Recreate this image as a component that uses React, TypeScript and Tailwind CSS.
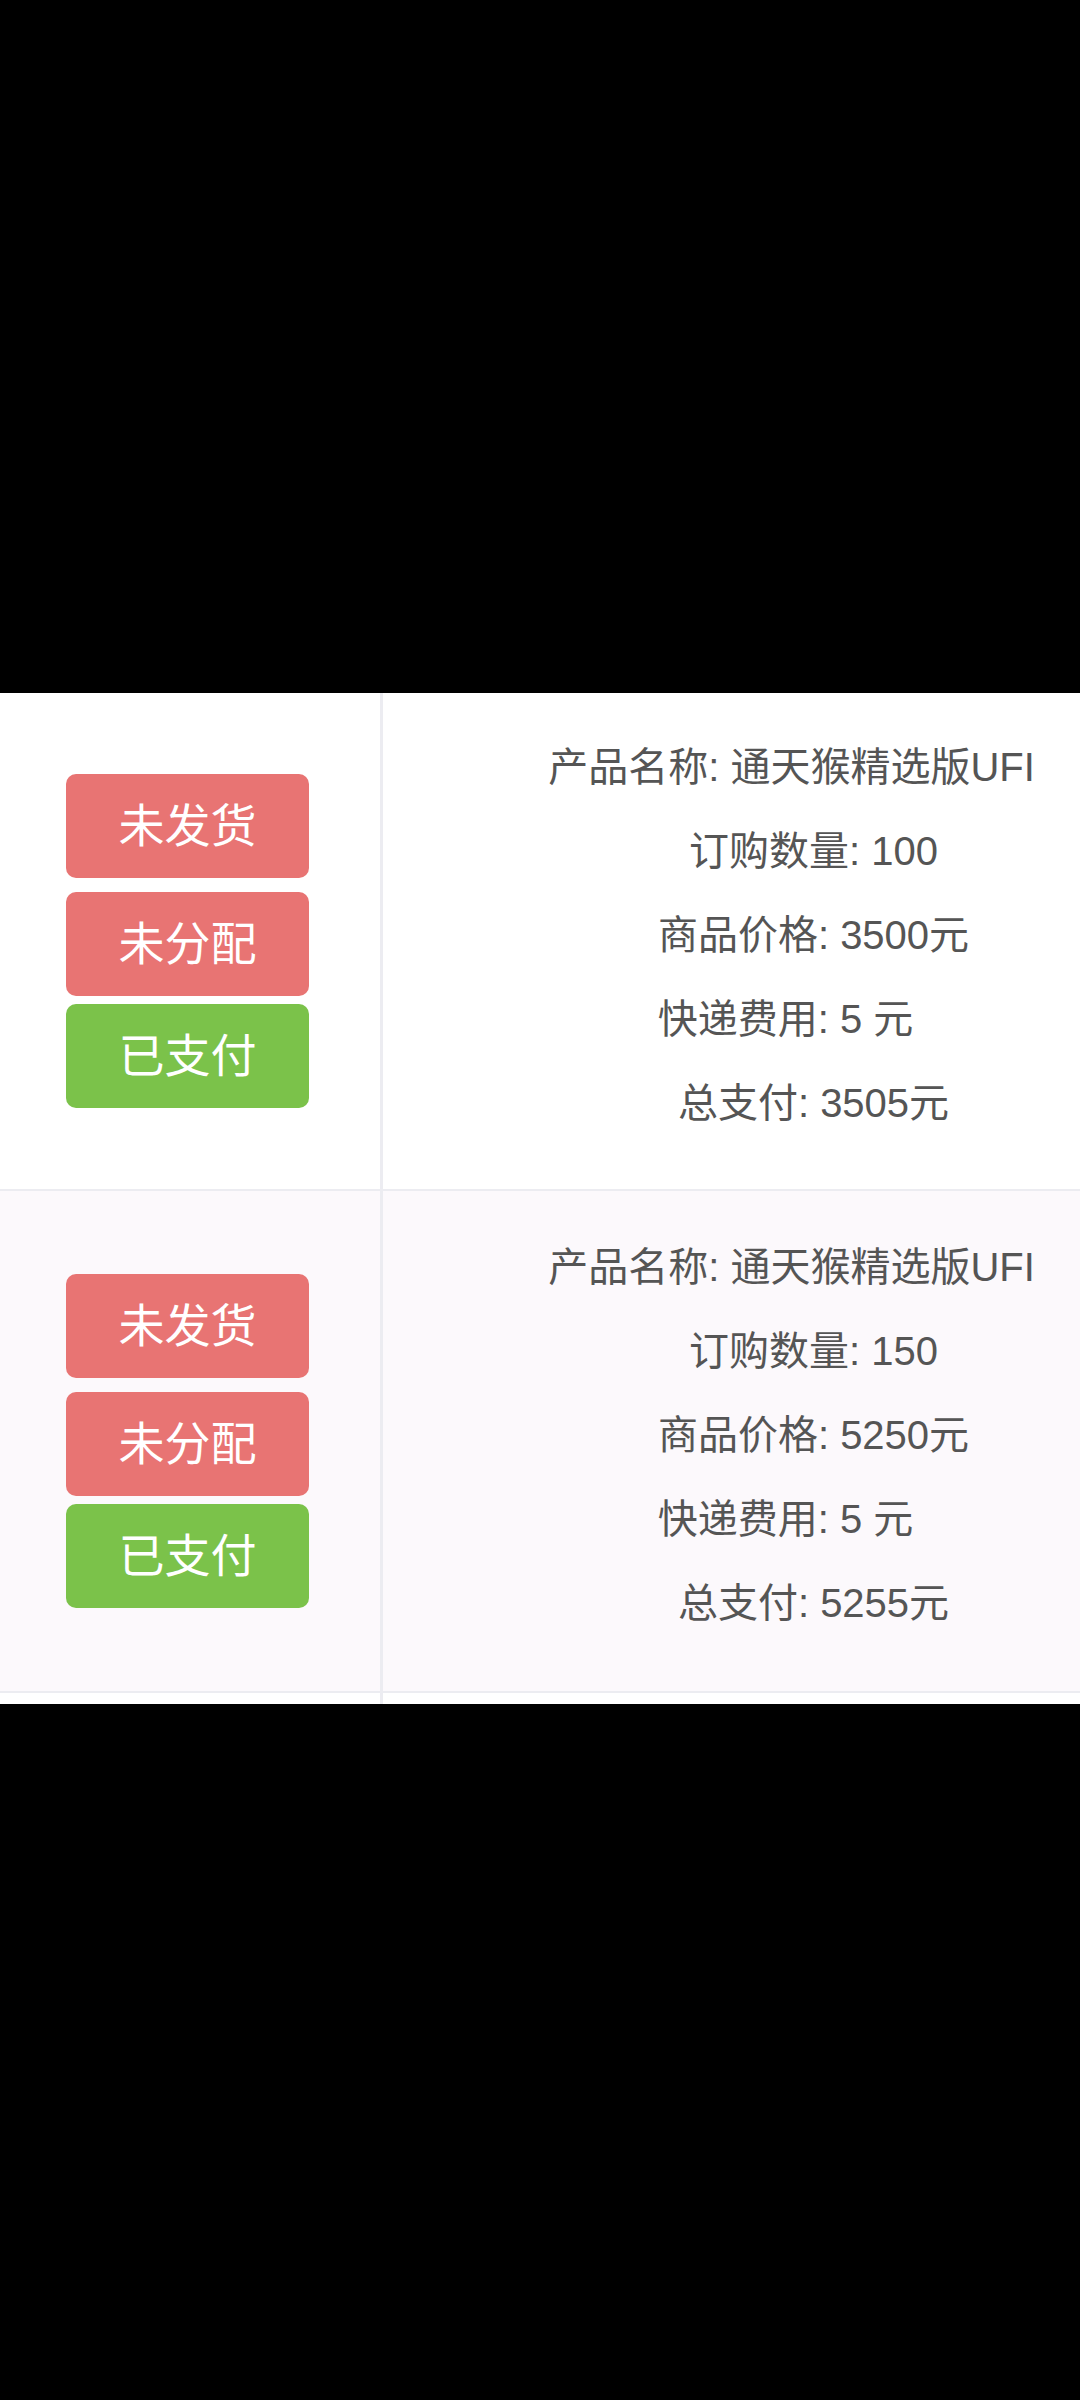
import React from "react";

type Order = {
  qty: number;
  price: number;
  total: number;
  bg: string;
};

const orders: Order[] = [
  { qty: 100, price: 3500, total: 3505, bg: "bg-white" },
  { qty: 150, price: 5250, total: 5255, bg: "bg-[#fcf9fc]" },
];

const StatusButtons = () => (
  <div className="flex flex-col pl-[66px]">
    <div className="w-[243px] h-[104px] mb-[14px] rounded-[10px] bg-[#e87473] text-white text-[46px] flex items-center justify-center">
      未发货
    </div>
    <div className="w-[243px] h-[104px] mb-[8px] rounded-[10px] bg-[#e87473] text-white text-[46px] flex items-center justify-center">
      未分配
    </div>
    <div className="w-[243px] h-[104px] rounded-[10px] bg-[#7bc24a] text-white text-[46px] flex items-center justify-center">
      已支付
    </div>
  </div>
);

const OrderRow = ({ order, height }: { order: Order; height: string }) => (
  <div className={`flex border-b-2 border-[#ececf1] ${order.bg} ${height}`}>
    {/* status column */}
    <div className="w-[383px] shrink-0 border-r-[3px] border-[#ececf1] flex items-center">
      <StatusButtons />
    </div>

    {/* detail column */}
    <div className="flex-1 flex flex-col items-center justify-center pl-[164px] pb-[12px] text-[40px] leading-[84px] text-[#555] whitespace-nowrap">
      <div className="mr-[44px]">产品名称: 通天猴精选版UFI</div>
      <div>订购数量: {order.qty}</div>
      <div>商品价格: {order.price}元</div>
      <div className="mr-[56px]">快递费用: 5 元</div>
      <div>总支付: {order.total}元</div>
    </div>
  </div>
);

export default function App() {
  return (
    <div
      className="w-[1080px] h-[2400px] bg-black overflow-hidden flex flex-col"
      style={{ fontFamily: '"Liberation Sans", "Noto Sans CJK SC", sans-serif' }}
    >
      <div className="h-[693px] shrink-0" />
      <div className="bg-white">
        <OrderRow order={orders[0]} height="h-[498px]" />
        <OrderRow order={orders[1]} height="h-[502px]" />
        <div className="h-[11px] flex">
          <div className="w-[383px] border-r-[3px] border-[#ececf1]" />
        </div>
      </div>
    </div>
  );
}
